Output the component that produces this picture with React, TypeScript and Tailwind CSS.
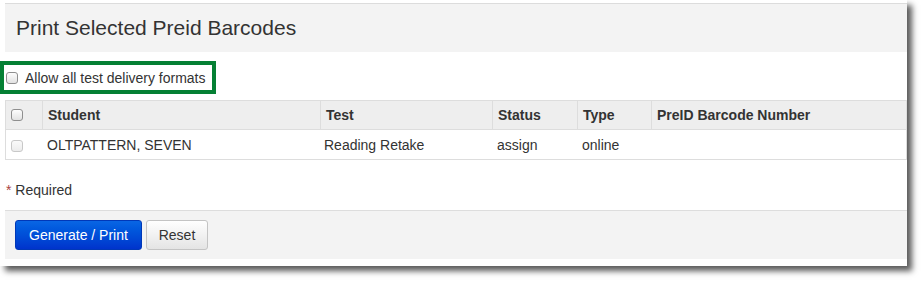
import React from "react";

function Box({ disabled }: { disabled?: boolean }) {
  return (
    <span
      className={
        "inline-block w-[12px] h-[12px] rounded-[3px] border " +
        (disabled
          ? "border-[#c8c8c8] bg-gradient-to-b from-[#fafafa] to-[#ececec]"
          : "border-[#8f8f8f] bg-gradient-to-b from-[#fdfdfd] to-[#e2e2e2]")
      }
    />
  );
}

export default function App() {
  return (
    <div
      className="w-[922px] h-[282px] bg-white text-[#333]"
      style={{ fontFamily: '"Liberation Sans", Arial, sans-serif' }}
    >
      <div className="w-[907px] h-[266px] bg-white shadow-[5px_5px_6px_rgba(0,0,0,0.65)] pt-[3px] pl-[5px]">
        <div className="border-t border-[#dcdcdc] bg-[#f3f3f3] h-[49px] flex items-center pl-[11px]">
          <span className="text-[21px] leading-[28px] text-[#333]">Print Selected Preid Barcodes</span>
        </div>

        <div className="-ml-[5px] mt-[9px] w-[216px] h-[33px] border-4 border-[#058034] flex items-center pl-[2px] gap-[7px]">
          <Box />
          <span className="text-[14px] leading-[20px]">Allow all test delivery formats</span>
        </div>

        <div className="mt-[6px] border border-[#dddddd] text-[14px]">
          <div className="flex h-[29px] bg-[#eeeeee] border-b border-[#dddddd] font-bold">
            <div className="w-[37px] flex items-center pl-[5px] border-r border-[#dddddd]">
              <Box />
            </div>
            <div className="w-[278px] flex items-center pl-[5px] border-r border-[#dddddd]">Student</div>
            <div className="w-[172px] flex items-center pl-[5px] border-r border-[#dddddd]">Test</div>
            <div className="w-[85px] flex items-center pl-[5px] border-r border-[#dddddd]">Status</div>
            <div className="w-[74px] flex items-center pl-[5px] border-r border-[#dddddd]">Type</div>
            <div className="flex-1 flex items-center pl-[5px]">PreID Barcode Number</div>
          </div>
          <div className="flex h-[29px] pt-[2px]">
            <div className="w-[37px] flex items-center pl-[5px]">
              <Box disabled />
            </div>
            <div className="w-[278px] flex items-center pl-[4px]">OLTPATTERN, SEVEN</div>
            <div className="w-[172px] flex items-center pl-[3px]">Reading Retake</div>
            <div className="w-[85px] flex items-center pl-[4px]">assign</div>
            <div className="w-[74px] flex items-center pl-[4px]">online</div>
            <div className="flex-1" />
          </div>
        </div>

        <div className="mt-[20px] h-[20px] text-[14px] leading-[20px] pl-[1px]">
          <span className="text-[#a94442]">*</span> Required
        </div>

        <div className="mt-[10px] border-t border-[#dddddd] bg-[#f3f3f3] h-[49px] pt-[9px] pl-[10px] flex gap-[4px] items-start">
          <button className="h-[30px] w-[127px] rounded-[3px] border border-[#0038b8] bg-gradient-to-b from-[#0a66e4] to-[#0033cc] text-white text-[14px]">
            Generate / Print
          </button>
          <button className="h-[30px] w-[62px] rounded-[3px] border border-[#c4c4c4] bg-gradient-to-b from-[#ffffff] to-[#e4e4e4] text-[#333] text-[14px]">
            Reset
          </button>
        </div>
      </div>
    </div>
  );
}
